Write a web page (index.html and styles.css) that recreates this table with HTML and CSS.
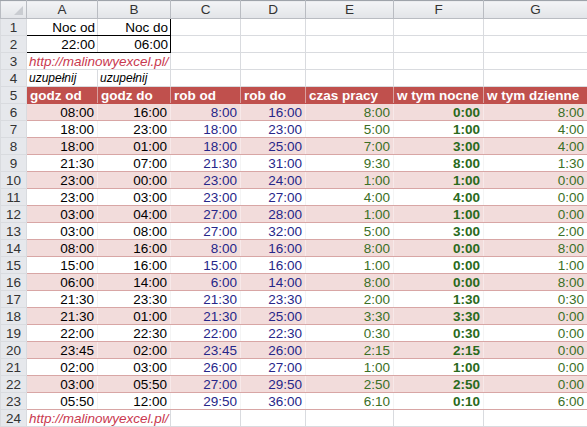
FILE: index.html
```html
<!DOCTYPE html>
<html lang="pl">
<head>
<meta charset="utf-8">
<link rel="stylesheet" href="styles.css">
</head>
<body>
<table class="sheet">
  <colgroup>
    <col class="c-rh"><col class="c-a"><col class="c-b"><col class="c-c"><col class="c-d"><col class="c-e"><col class="c-f"><col class="c-g">
  </colgroup>
  <thead>
    <tr class="colhdr">
      <th class="corner"><span class="tri"></span></th><th>A</th><th>B</th><th>C</th><th>D</th><th>E</th><th>F</th><th>G</th>
    </tr>
  </thead>
  <tbody>
    <tr><th class="rh">1</th><td class="num box-top">Noc od</td><td class="num box-top box-r">Noc do</td><td></td><td></td><td></td><td></td><td></td></tr>
    <tr><th class="rh">2</th><td class="num box-bot">22:00</td><td class="num box-bot box-r">06:00</td><td></td><td></td><td></td><td></td><td></td></tr>
    <tr><th class="rh">3</th><td class="link" colspan="2">http://malinowyexcel.pl/</td><td></td><td></td><td></td><td></td><td></td></tr>
    <tr><th class="rh">4</th><td class="hint">uzupełnij</td><td class="hint">uzupełnij</td><td></td><td></td><td></td><td></td><td></td></tr>
    <tr class="head"><th class="rh">5</th><td>godz od</td><td>godz do</td><td>rob od</td><td>rob do</td><td>czas pracy</td><td>w tym nocne</td><td>w tym dzienne</td></tr>
    <tr class="d band"><th class="rh">6</th><td>08:00</td><td>16:00</td><td class="b">8:00</td><td class="b">16:00</td><td class="g">8:00</td><td class="n">0:00</td><td class="g">8:00</td></tr>
    <tr class="d"><th class="rh">7</th><td>18:00</td><td>23:00</td><td class="b">18:00</td><td class="b">23:00</td><td class="g">5:00</td><td class="n">1:00</td><td class="g">4:00</td></tr>
    <tr class="d band"><th class="rh">8</th><td>18:00</td><td>01:00</td><td class="b">18:00</td><td class="b">25:00</td><td class="g">7:00</td><td class="n">3:00</td><td class="g">4:00</td></tr>
    <tr class="d"><th class="rh">9</th><td>21:30</td><td>07:00</td><td class="b">21:30</td><td class="b">31:00</td><td class="g">9:30</td><td class="n">8:00</td><td class="g">1:30</td></tr>
    <tr class="d band"><th class="rh">10</th><td>23:00</td><td>00:00</td><td class="b">23:00</td><td class="b">24:00</td><td class="g">1:00</td><td class="n">1:00</td><td class="g">0:00</td></tr>
    <tr class="d"><th class="rh">11</th><td>23:00</td><td>03:00</td><td class="b">23:00</td><td class="b">27:00</td><td class="g">4:00</td><td class="n">4:00</td><td class="g">0:00</td></tr>
    <tr class="d band"><th class="rh">12</th><td>03:00</td><td>04:00</td><td class="b">27:00</td><td class="b">28:00</td><td class="g">1:00</td><td class="n">1:00</td><td class="g">0:00</td></tr>
    <tr class="d"><th class="rh">13</th><td>03:00</td><td>08:00</td><td class="b">27:00</td><td class="b">32:00</td><td class="g">5:00</td><td class="n">3:00</td><td class="g">2:00</td></tr>
    <tr class="d band"><th class="rh">14</th><td>08:00</td><td>16:00</td><td class="b">8:00</td><td class="b">16:00</td><td class="g">8:00</td><td class="n">0:00</td><td class="g">8:00</td></tr>
    <tr class="d"><th class="rh">15</th><td>15:00</td><td>16:00</td><td class="b">15:00</td><td class="b">16:00</td><td class="g">1:00</td><td class="n">0:00</td><td class="g">1:00</td></tr>
    <tr class="d band"><th class="rh">16</th><td>06:00</td><td>14:00</td><td class="b">6:00</td><td class="b">14:00</td><td class="g">8:00</td><td class="n">0:00</td><td class="g">8:00</td></tr>
    <tr class="d"><th class="rh">17</th><td>21:30</td><td>23:30</td><td class="b">21:30</td><td class="b">23:30</td><td class="g">2:00</td><td class="n">1:30</td><td class="g">0:30</td></tr>
    <tr class="d band"><th class="rh">18</th><td>21:30</td><td>01:00</td><td class="b">21:30</td><td class="b">25:00</td><td class="g">3:30</td><td class="n">3:30</td><td class="g">0:00</td></tr>
    <tr class="d"><th class="rh">19</th><td>22:00</td><td>22:30</td><td class="b">22:00</td><td class="b">22:30</td><td class="g">0:30</td><td class="n">0:30</td><td class="g">0:00</td></tr>
    <tr class="d band"><th class="rh">20</th><td>23:45</td><td>02:00</td><td class="b">23:45</td><td class="b">26:00</td><td class="g">2:15</td><td class="n">2:15</td><td class="g">0:00</td></tr>
    <tr class="d"><th class="rh">21</th><td>02:00</td><td>03:00</td><td class="b">26:00</td><td class="b">27:00</td><td class="g">1:00</td><td class="n">1:00</td><td class="g">0:00</td></tr>
    <tr class="d band"><th class="rh">22</th><td>03:00</td><td>05:50</td><td class="b">27:00</td><td class="b">29:50</td><td class="g">2:50</td><td class="n">2:50</td><td class="g">0:00</td></tr>
    <tr class="d last"><th class="rh">23</th><td>05:50</td><td>12:00</td><td class="b">29:50</td><td class="b">36:00</td><td class="g">6:10</td><td class="n">0:10</td><td class="g">6:00</td></tr>
    <tr><th class="rh">24</th><td class="link" colspan="2">http://malinowyexcel.pl/</td><td></td><td></td><td></td><td></td><td></td></tr>
  </tbody>
</table>
</body>
</html>
```
FILE: styles.css
```css
html, body {
  margin: 0;
  padding: 0;
  background: #ffffff;
}
body {
  font-family: "Liberation Sans", Arial, sans-serif;
  font-size: 13px;
  color: #000;
  overflow: hidden;
}
.sheet {
  border-collapse: collapse;
  table-layout: fixed;
  width: 587px;
}
.c-rh { width: 26px; }
.c-a { width: 71px; }
.c-b { width: 73px; }
.c-c { width: 70px; }
.c-d { width: 65px; }
.c-e { width: 88px; }
.c-f { width: 90px; }
.c-g { width: 104px; }

.sheet td, .sheet th {
  height: 17px;
  padding: 0 2px;
  box-sizing: border-box;
  border: 1px solid #d9dbdf;
  line-height: 15px;
  white-space: nowrap;
  overflow: hidden;
}
.colhdr th {
  height: 18px;
  font-weight: normal;
  color: #333;
  font-size: 13.5px;
  background: linear-gradient(#f3f4f6, #e2e4e8);
  border-color: #b9bcc2;
  border-top: 1px solid #9ea3aa;
  text-align: center;
}
.corner {
  position: relative;
}
.tri {
  position: absolute;
  right: 3px;
  bottom: 3px;
  width: 0;
  height: 0;
  border-left: 9px solid transparent;
  border-bottom: 9px solid #c9ccd1;
}
.rh {
  font-weight: normal;
  color: #333;
  font-size: 13.5px;
  background: #e6e8ec;
  border-color: #b9bcc2;
  text-align: center;
  padding: 0;
}
.num { text-align: right; font-size: 13.5px; }
.box-top { border-bottom: 1px solid #000 !important; border-right-color: #fff; }
.box-bot { border-bottom: 1px solid #000 !important; border-right-color: #fff; }
.box-r { border-right: 1px solid #000 !important; }
.link {
  font-style: italic;
  color: #c9394f;
  font-size: 13.5px;
}
.hint {
  font-style: italic;
  font-size: 12px;
}
.head td {
  background: #c0504d;
  color: #fff;
  font-weight: bold;
  font-size: 13.5px;
  border-color: #d9a09f;
  border-bottom-color: #c0504d;
  padding-left: 3px;
}
.d td {
  text-align: right;
  font-size: 13.5px;
  border-top: 1px solid #d8a6a5;
  border-bottom: 1px solid #d8a6a5;
  border-left-color: #f4f4f4;
  border-right-color: #f4f4f4;
  padding-right: 3px;
}
.band td {
  background: #f2dcdb;
  border-left-color: #f7e9e9;
  border-right-color: #f7e9e9;
}
.d td.b { color: #262689; }
.d td.g { color: #3b6f26; }
.d td.n { color: #2a6a1c; font-weight: bold; }
```
